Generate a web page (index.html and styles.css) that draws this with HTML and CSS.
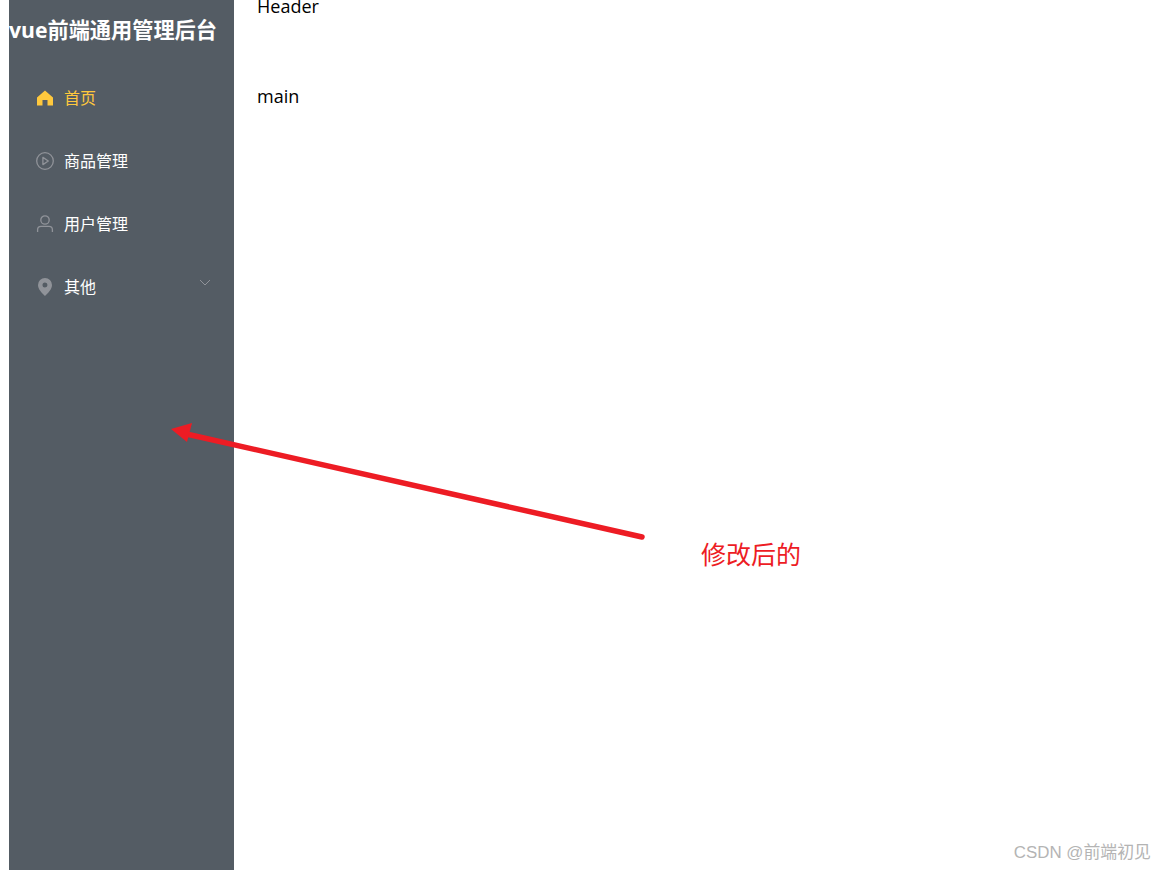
FILE: index.html
```html
<!DOCTYPE html>
<html lang="zh-CN">
<head>
<meta charset="utf-8">
<title>vue前端通用管理后台</title>
<link rel="stylesheet" href="styles.css">
</head>
<body>
<div class="layout">
  <aside class="aside">
    <h3 class="title">vue前端通用管理后台</h3>
    <ul class="menu">
      <li class="item active">
        <svg class="icon" viewBox="0 0 18 18"><path fill="currentColor" d="M9 1.500 1 8.500V16.500H6.500V11H11.500V16.500H17V8.500z"/></svg>
        <span>首页</span>
      </li>
      <li class="item">
        <svg class="icon" viewBox="0 0 18 18" fill="none" stroke="currentColor" stroke-width="1.300"><circle cx="9" cy="9" r="8.300"/><path d="M6.900 5.400v7.200L12.300 9z" stroke-linejoin="round"/></svg>
        <span>商品管理</span>
      </li>
      <li class="item">
        <svg class="icon" viewBox="0 0 18 18" fill="none" stroke="currentColor" stroke-width="1.300"><circle cx="9" cy="5" r="4.200"/><path d="M1.600 17v-2.200c0-2 1.600-3.400 3.400-3.400h8c1.800 0 3.400 1.400 3.400 3.400V17"/></svg>
        <span>用户管理</span>
      </li>
      <li class="item">
        <svg class="icon" viewBox="0 0 18 18"><path fill="currentColor" fill-rule="evenodd" d="M9 0a7 7 0 0 1 7 7c0 4-3.600 7.800-7 11-3.400-3.200-7-7-7-11a7 7 0 0 1 7-7zm0 4.500a2.500 2.500 0 1 0 0 5 2.500 2.500 0 0 0 0-5z"/></svg>
        <span>其他</span>
        <svg class="chevron" viewBox="0 0 12 7" fill="none" stroke="currentColor"><path d="m1 1 5 5 5-5"/></svg>
      </li>
    </ul>
  </aside>
  <div class="content">
    <header class="header">Header</header>
    <main class="main">main</main>
  </div>
</div>
<svg class="arrow" viewBox="0 0 1166 870" aria-hidden="true">
  <path class="arrow-line" d="M642 537 182 433"/>
  <path class="arrow-head" d="M171 429 192 423 187 442z"/>
</svg>
<p class="note">修改后的</p>
<p class="mark">CSDN @前端初见</p>
</body>
</html>
```
FILE: styles.css
```css
* { box-sizing: border-box; }
html, body { height: 100%; }
body {
  margin: 0 0 0 9px;
  overflow: hidden;
  background: #fff;
  font-family: "Open Sans", "Noto Sans CJK SC", sans-serif;
}
.layout { display: flex; height: 870px; }
.aside {
  width: 225px;
  flex: none;
  background: #545c64;
  color: #fff;
}
.title {
  margin: 0;
  padding-top: 17px;
  font: 700 21.200px/26px "Open Sans", "Noto Sans CJK SC", sans-serif;
  white-space: nowrap;
}
.menu { list-style: none; margin: 0; padding: 23px 0 0; }
.item {
  display: flex;
  align-items: center;
  gap: 10px;
  height: 63px;
  padding: 0 23px 0 27px;
  font: 16px/20px "Open Sans", "Noto Sans CJK SC", sans-serif;
  color: #fff;
}
.item.active, .item.active .icon { color: #ffc83d; }
.icon { width: 18px; height: 18px; flex: none; color: #909399; }
.chevron { width: 12px; height: 7px; margin-left: auto; margin-top: -9px; color: #909399; }
.content { flex: 1; padding: 0 0 0 23px; font-size: 18px; color: #000; }
.header { height: 60px; margin-top: -6px; line-height: 24px; }
.main { padding-top: 30px; line-height: 24px; }
.arrow { position: absolute; left: 0; top: 0; width: 1166px; height: 870px; pointer-events: none; }
.arrow-line { fill: none; stroke: #ed1c24; stroke-width: 5.500; stroke-linecap: round; }
.arrow-head { fill: #ed1c24; }
.note {
  position: absolute;
  left: 701px;
  top: 537px;
  margin: 0;
  color: #ed1c24;
  font: 25px/32px "Noto Sans CJK SC", sans-serif;
}
.mark {
  position: absolute;
  right: 15px;
  top: 842px;
  margin: 0;
  color: #b4b4b4;
  font: 16.900px/22px "Liberation Sans", "Noto Sans CJK SC", sans-serif;
}
```
